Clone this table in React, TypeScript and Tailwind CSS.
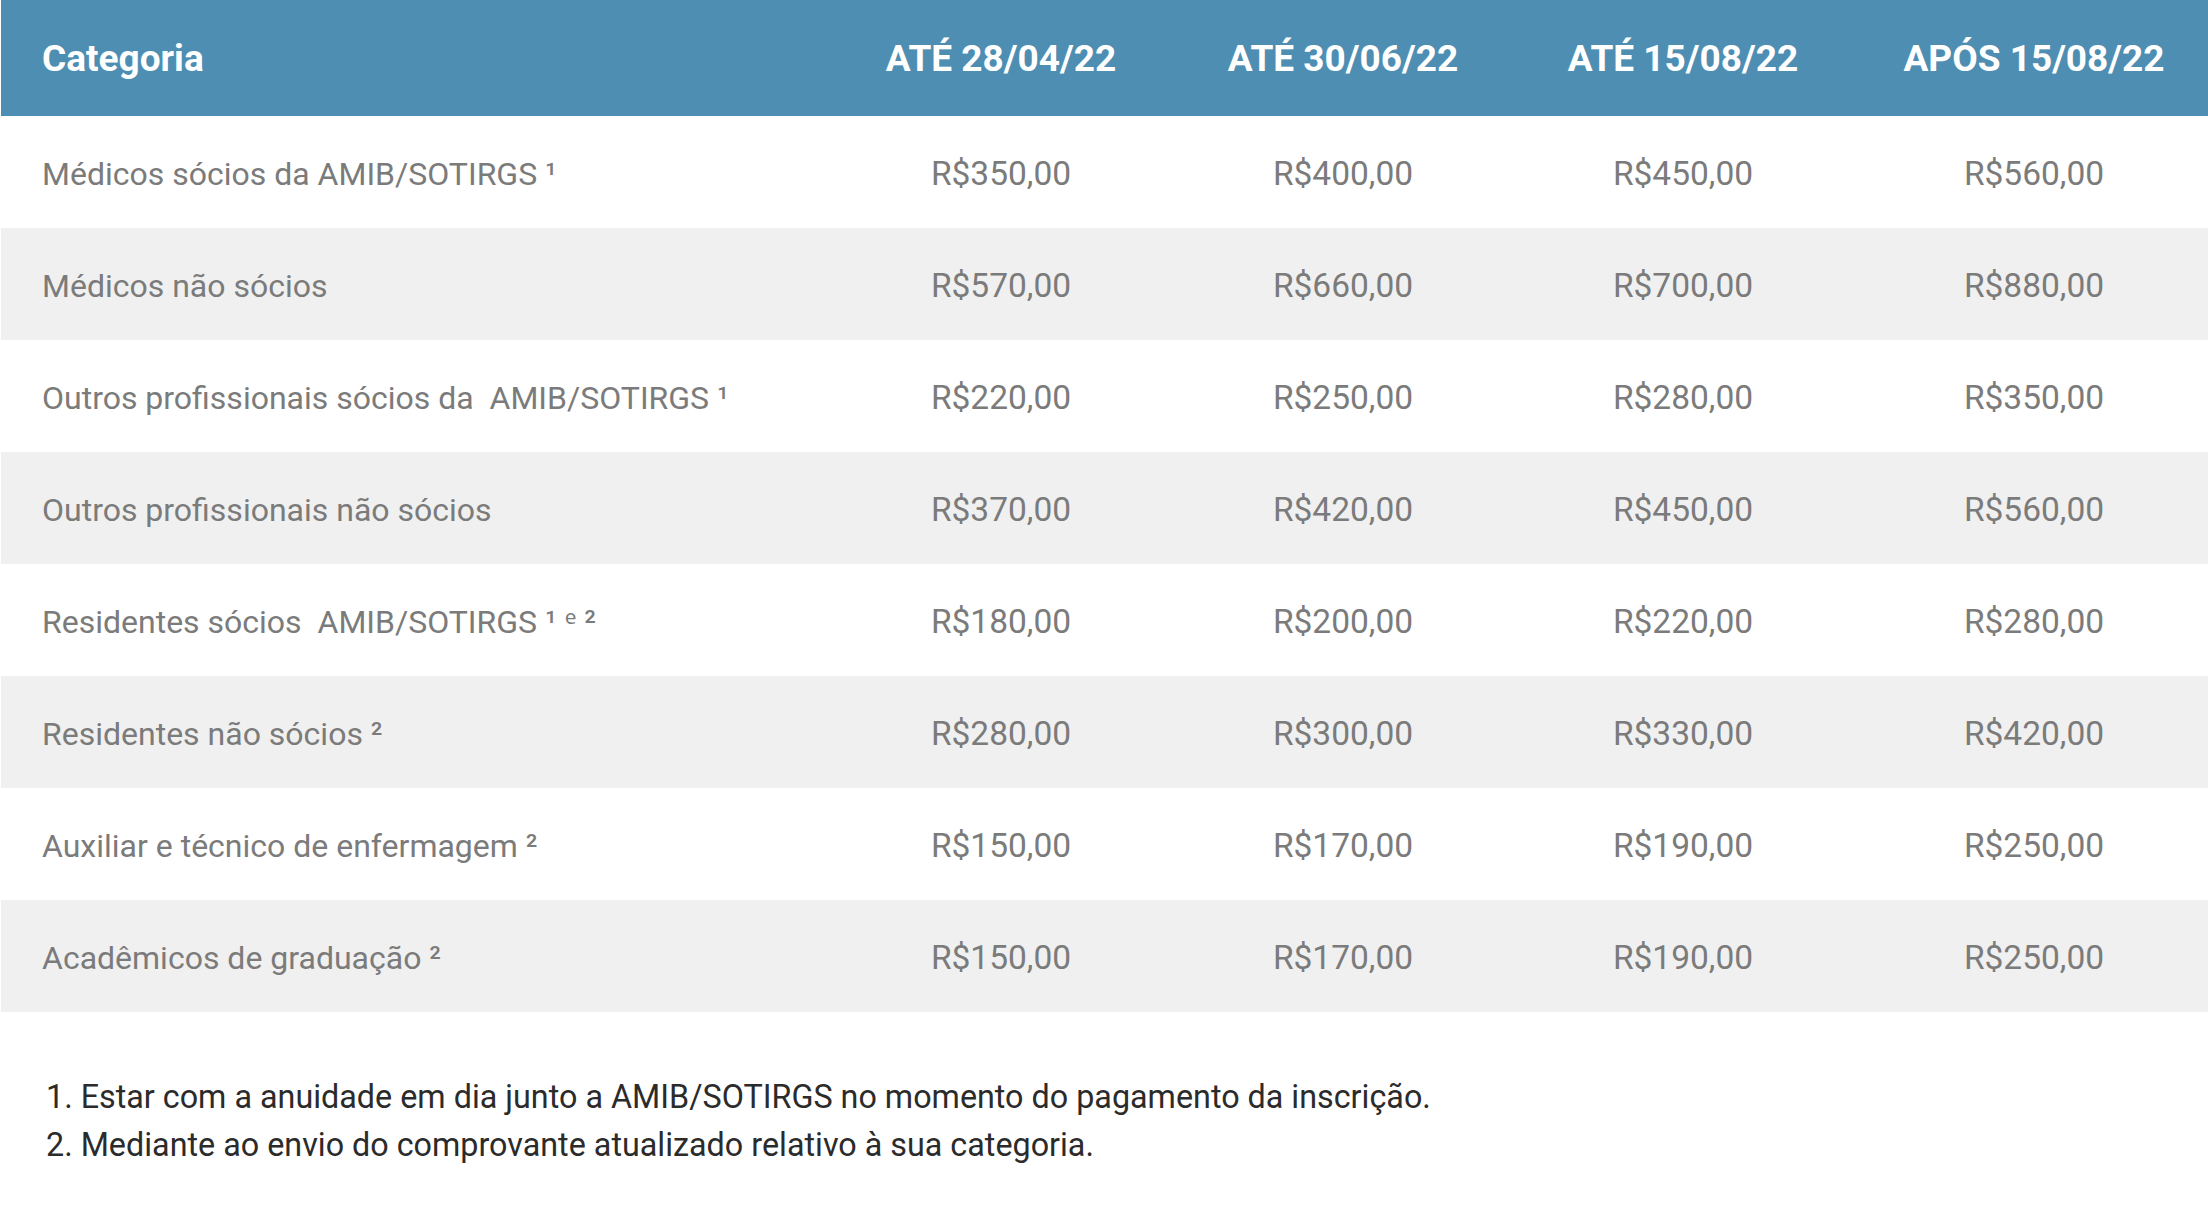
import React from "react";

interface PriceRow {
  category: string;
  prices: string[];
}

const columns = ["ATÉ 28/04/22", "ATÉ 30/06/22", "ATÉ 15/08/22", "APÓS 15/08/22"];

const rows: PriceRow[] = [
  { category: "Médicos sócios da AMIB/SOTIRGS ¹", prices: ["R$350,00", "R$400,00", "R$450,00", "R$560,00"] },
  { category: "Médicos não sócios", prices: ["R$570,00", "R$660,00", "R$700,00", "R$880,00"] },
  { category: "Outros profissionais sócios da  AMIB/SOTIRGS ¹", prices: ["R$220,00", "R$250,00", "R$280,00", "R$350,00"] },
  { category: "Outros profissionais não sócios", prices: ["R$370,00", "R$420,00", "R$450,00", "R$560,00"] },
  { category: "Residentes sócios  AMIB/SOTIRGS ¹ ᵉ ²", prices: ["R$180,00", "R$200,00", "R$220,00", "R$280,00"] },
  { category: "Residentes não sócios ²", prices: ["R$280,00", "R$300,00", "R$330,00", "R$420,00"] },
  { category: "Auxiliar e técnico de enfermagem ²", prices: ["R$150,00", "R$170,00", "R$190,00", "R$250,00"] },
  { category: "Acadêmicos de graduação ²", prices: ["R$150,00", "R$170,00", "R$190,00", "R$250,00"] },
];

// last column is nudged right a little, as in the original table
const gridCols = "grid grid-cols-[829px_342px_342px_338px_356px]";

const App: React.FC = () => {
  return (
    <div
      className="min-h-screen bg-white pl-px"
      style={{ fontFamily: "Roboto, 'Noto Sans', sans-serif" }}
    >
      {/* Price table */}
      <div className="w-full">
        <div className={`${gridCols} h-[116px] items-center bg-[#4e8eb3] pt-[2px] text-white font-bold text-[37px]`}>
          <div className="pl-[41px]">Categoria</div>
          {columns.map((col, j) => (
            <div key={col} className={`text-center ${j === 3 ? "pl-[8px]" : ""}`}>
              {col}
            </div>
          ))}
        </div>

        {rows.map((row, i) => (
          <div
            key={row.category}
            className={`${gridCols} h-[112px] items-center text-[#7b7b7b] ${
              i % 2 === 1 ? "bg-[#f0f0f0]" : "bg-white"
            }`}
          >
            <div className="pl-[41px] pt-[3px] whitespace-pre text-[32px]">{row.category}</div>
            {row.prices.map((price, j) => (
              <div key={j} className={`text-center pt-[4px] text-[33.5px] ${j === 3 ? "pl-[8px]" : ""}`}>
                {price}
              </div>
            ))}
          </div>
        ))}
      </div>

      {/* Footnotes */}
      <ol className="mt-[61px] pl-[45px] text-[32.3px] leading-[48px] text-[#2b2b2b]">
        <li>1. Estar com a anuidade em dia junto a AMIB/SOTIRGS no momento do pagamento da inscrição.</li>
        <li>2. Mediante ao envio do comprovante atualizado relativo à sua categoria.</li>
      </ol>
    </div>
  );
};

export default App;
